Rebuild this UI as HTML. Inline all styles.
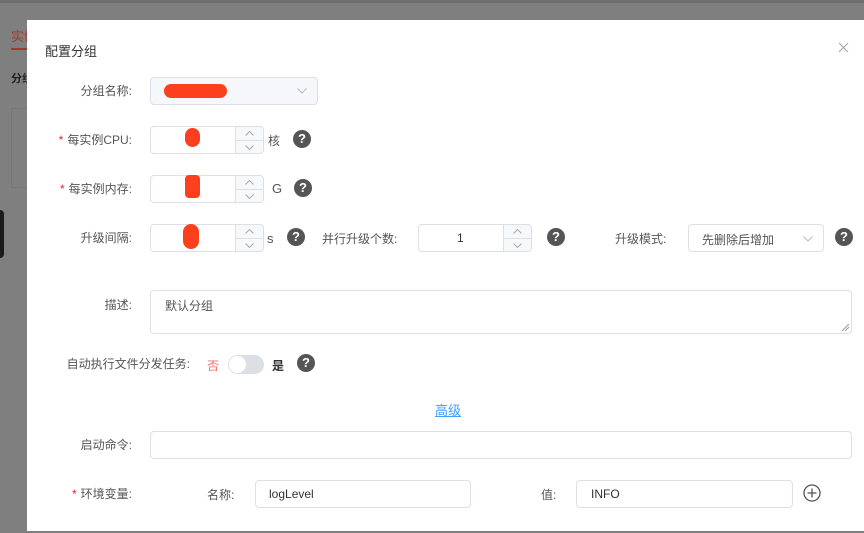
<!DOCTYPE html>
<html><head><meta charset="utf-8"><style>
*{box-sizing:border-box;margin:0;padding:0}
body{width:864px;height:533px;overflow:hidden;background:#7f7f7f;position:relative;font-family:"Liberation Sans","Noto Sans CJK SC",sans-serif;font-size:12px;color:#333}
.a{position:absolute}
.lbl{position:absolute;text-align:right;font-size:12px;color:#555;line-height:16px}
.star{color:#f5222d;margin-right:4px}
.in{position:absolute;border:1px solid #dcdfe6;border-radius:4px;background:#fff}
.q{position:absolute;width:18px;height:18px;border-radius:50%;background:#555;color:#fff;font-weight:bold;font-size:13px;text-align:center;line-height:18px}
.sp{position:absolute;right:0;top:0;width:28px;height:100%;border-left:1px solid #dcdfe6;background:#f7f8fa;border-radius:0 4px 4px 0}
.sp div{height:50%;position:relative}
.sp div+div{border-top:1px solid #dcdfe6}
.sp svg{position:absolute;left:9px;top:4px}
.red{position:absolute;background:#fc3f1d;border-radius:8px}
</style></head><body>
<div class="a" style="left:0;top:0;width:864px;height:3px;background:#6e6e6e"></div>
<div class="a" style="left:11px;top:26px;color:#a03a30;font-size:13px">实例</div>
<div class="a" style="left:11px;top:48px;width:16px;height:2px;background:#a03a30"></div>
<div class="a" style="left:11px;top:70px;color:#222;font-size:11px;font-weight:bold">分组</div>
<div class="a" style="left:11px;top:108px;width:20px;height:80px;border:1px solid #777;border-right:none"></div>
<div class="a" style="left:0;top:210px;width:4px;height:48px;background:#1b1b1b;border-radius:0 4px 4px 0"></div>
<div class="a" style="left:27px;top:20px;width:840px;height:511px;background:#fff"></div>
<div class="a" style="left:45px;top:41px;font-size:13px;color:#333">配置分组</div>
<svg class="a" style="left:838px;top:42px" width="11" height="11"><path d="M1 1L10 10M10 1L1 10" stroke="#aaa" stroke-width="1.2"/></svg>

<div class="lbl" style="left:40px;width:92px;top:83px">分组名称:</div>
<div class="in" style="left:150px;top:77px;width:168px;height:28px;background:#f5f7fa"><div class="red" style="left:13px;top:6px;width:63px;height:14px"></div><svg class="a" style="right:10px;top:10px" width="10" height="6"><path d="M0.5 0.5L5 5L9.5 0.5" stroke="#bbb" fill="none"/></svg></div>

<div class="lbl" style="left:40px;width:92px;top:132px"><span class="star">*</span>每实例CPU:</div>
<div class="in" style="left:150px;top:126px;width:114px;height:28px"><div class="red" style="left:34px;top:1px;width:15px;height:19px"></div><div class="sp"><div><svg width="9" height="5"><path d="M0.5 4.5L4.5 0.5L8.5 4.5" stroke="#aaa" fill="none"/></svg></div><div><svg width="9" height="5"><path d="M0.5 0.5L4.5 4.5L8.5 0.5" stroke="#aaa" fill="none"/></svg></div></div></div>
<div class="a" style="left:268px;top:132px;color:#555">核</div><div class="q" style="left:293px;top:130px">?</div>

<div class="lbl" style="left:40px;width:92px;top:181px"><span class="star">*</span>每实例内存:</div>
<div class="in" style="left:150px;top:175px;width:114px;height:28px"><div class="red" style="left:34px;top:-1px;width:15px;height:23px;border-radius:4px"></div><div class="sp"><div><svg width="9" height="5"><path d="M0.5 4.5L4.5 0.5L8.5 4.5" stroke="#aaa" fill="none"/></svg></div><div><svg width="9" height="5"><path d="M0.5 0.5L4.5 4.5L8.5 0.5" stroke="#aaa" fill="none"/></svg></div></div></div>
<div class="a" style="left:272px;top:181px;color:#555;font-size:13px">G</div><div class="q" style="left:294px;top:179px">?</div>

<div class="lbl" style="left:40px;width:92px;top:230px">升级间隔:</div>
<div class="in" style="left:150px;top:224px;width:114px;height:28px"><div class="red" style="left:32px;top:-1px;width:16px;height:25px"></div><div class="sp"><div><svg width="9" height="5"><path d="M0.5 4.5L4.5 0.5L8.5 4.5" stroke="#aaa" fill="none"/></svg></div><div><svg width="9" height="5"><path d="M0.5 0.5L4.5 4.5L8.5 0.5" stroke="#aaa" fill="none"/></svg></div></div></div>
<div class="a" style="left:267px;top:231px;color:#555;font-size:13px">s</div><div class="q" style="left:287px;top:228px">?</div>
<div class="a" style="left:322px;top:230px;color:#555">并行升级个数:</div>
<div class="in" style="left:418px;top:224px;width:114px;height:28px"><span class="a" style="left:38px;top:6px">1</span><div class="sp"><div><svg width="9" height="5"><path d="M0.5 4.5L4.5 0.5L8.5 4.5" stroke="#aaa" fill="none"/></svg></div><div><svg width="9" height="5"><path d="M0.5 0.5L4.5 4.5L8.5 0.5" stroke="#aaa" fill="none"/></svg></div></div></div>
<div class="q" style="left:547px;top:228px">?</div>
<div class="a" style="left:615px;top:230px;color:#555">升级模式:</div>
<div class="in" style="left:688px;top:224px;width:136px;height:28px"><span class="a" style="left:13px;top:6px;color:#555">先删除后增加</span><svg class="a" style="right:10px;top:11px" width="10" height="6"><path d="M0.5 0.5L5 5L9.5 0.5" stroke="#bbb" fill="none"/></svg></div>
<div class="q" style="left:835px;top:228px">?</div>

<div class="lbl" style="left:40px;width:92px;top:297px">描述:</div>
<div class="in" style="left:150px;top:290px;width:702px;height:44px"><span class="a" style="left:14px;top:6px;color:#555">默认分组</span><svg class="a" style="right:2px;bottom:2px" width="7" height="7"><path d="M0 7L7 0M3 7L7 3" stroke="#999"/></svg></div>

<div class="lbl" style="left:40px;width:150px;top:356px">自动执行文件分发任务:</div>
<div class="a" style="left:207px;top:357px;color:#f56c6c">否</div>
<div class="a" style="left:228px;top:355px;width:36px;height:19px;border-radius:10px;background:#dcdfe6"><div class="a" style="left:1px;top:1px;width:17px;height:17px;border-radius:50%;background:#fff"></div></div>
<div class="a" style="left:272px;top:357px;color:#333;font-weight:bold">是</div>
<div class="q" style="left:297px;top:354px">?</div>

<div class="a" style="left:435px;top:400px;color:#409eff;text-decoration:underline;font-size:13px">高级</div>

<div class="lbl" style="left:40px;width:92px;top:437px">启动命令:</div>
<div class="in" style="left:150px;top:431px;width:702px;height:28px"></div>

<div class="lbl" style="left:40px;width:92px;top:486px"><span class="star">*</span>环境变量:</div>
<div class="a" style="left:207px;top:486px;color:#555">名称:</div>
<div class="in" style="left:255px;top:480px;width:216px;height:28px"><span class="a" style="left:13px;top:6px;color:#333">logLevel</span></div>
<div class="a" style="left:541px;top:486px;color:#555">值:</div>
<div class="in" style="left:576px;top:480px;width:217px;height:28px"><span class="a" style="left:14px;top:6px;color:#333">INFO</span></div>
<svg class="a" style="left:803px;top:484px" width="18" height="18"><circle cx="9" cy="9" r="8" stroke="#555" stroke-width="1.3" fill="none"/><path d="M9 4.5V13.5M4.5 9H13.5" stroke="#555" stroke-width="1.3"/></svg>
</body></html>
